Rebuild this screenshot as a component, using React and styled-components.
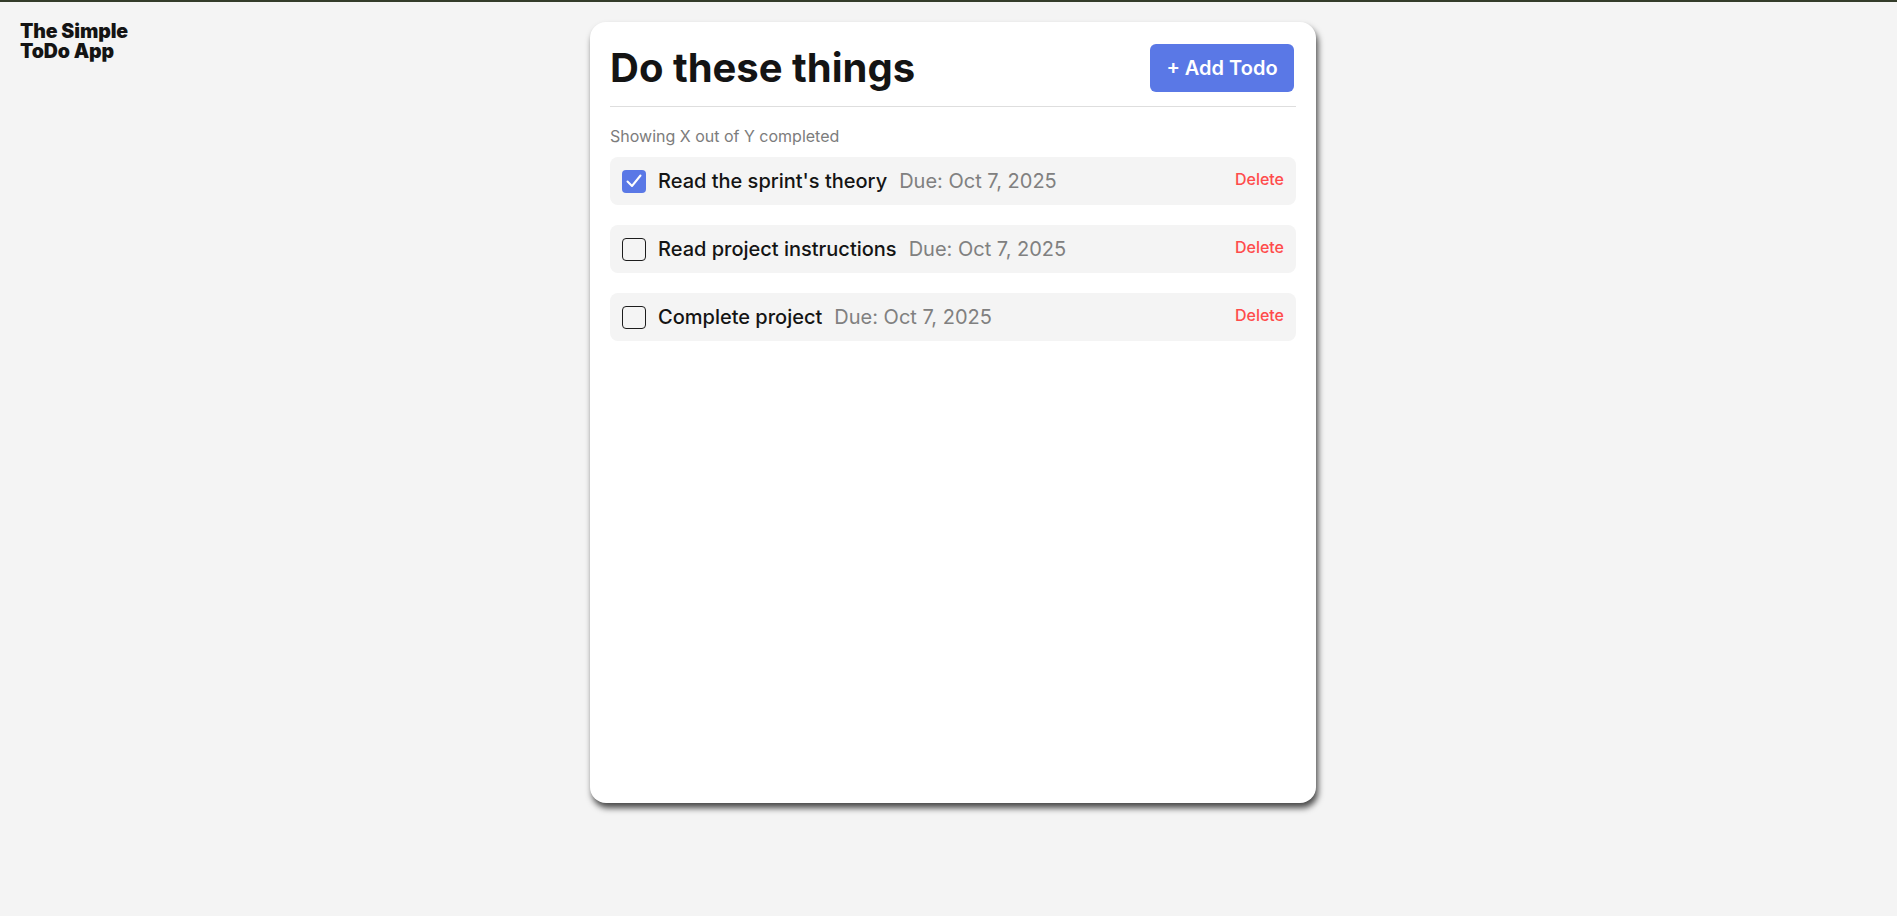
import React, { useState } from "react";
import styled, { createGlobalStyle } from "styled-components";

const GlobalStyle = createGlobalStyle`
  * { box-sizing: border-box; }
  html, body { margin: 0; padding: 0; }
  body {
    background: #f4f4f4;
    font-family: Inter, "Noto Sans", Arial, sans-serif;
    color: #141414;
    border-top: 2px solid #343c2a;
    min-height: 100vh;
  }
`;

const Page = styled.div`
  display: grid;
  grid-template-columns: 590px 726px 1fr;
  align-items: start;
  padding-top: 20px;
`;

const Brand = styled.h1`
  margin: 0;
  padding: 0 0 0 20px;
  font-size: 19.5px;
  font-weight: 900;
  line-height: 19.5px;
  letter-spacing: -0.1px;
  color: #141414;
  width: 150px;
`;

const Card = styled.main`
  background: #fff;
  height: 781px;
  border-radius: 16px;
  box-shadow: 2px 5px 6px rgba(0, 0, 0, 0.7);
  padding: 22px 20px 20px;
  display: flex;
  flex-direction: column;
`;

const Header = styled.header`
  display: flex;
  justify-content: space-between;
  align-items: center;
  padding: 0 2px 14px 0;
  border-bottom: 1.5px solid #dedede;
`;

const Title = styled.h2`
  margin: 0;
  font-size: 40px;
  font-weight: 700;
  line-height: 48px;
  color: #141414;
`;

const AddButton = styled.button`
  height: 48px;
  width: 144px;
  border: none;
  border-radius: 6px;
  background: #5a78e6;
  color: #fff;
  font-family: inherit;
  font-size: 20px;
  font-weight: 600;
  cursor: pointer;
`;

const Summary = styled.p`
  margin: 19px 0 11px;
  font-size: 16px;
  color: #7c7c7c;
  line-height: 20px;
`;

const List = styled.ul`
  list-style: none;
  margin: 0;
  padding: 0;
  display: flex;
  flex-direction: column;
  gap: 20px;
`;

const Row = styled.li`
  height: 48px;
  background: #f4f4f4;
  border-radius: 8px;
  display: flex;
  align-items: center;
  padding: 0 12px 0 12px;
`;

const Box = styled.span`
  width: 24px;
  height: 23px;
  flex: none;
  border-radius: 4px;
  display: flex;
  align-items: center;
  justify-content: center;
  background: ${(p) => (p.$checked ? "#5a78e6" : "transparent")};
  border: ${(p) => (p.$checked ? "none" : "1.2px solid #1c1c1c")};
  margin-right: 12px;
  cursor: pointer;
`;

const Name = styled.span`
  font-size: 20px;
  font-weight: 500;
  color: #141414;
  margin-right: 12px;
`;

const Due = styled.span`
  font-size: 20px;
  color: #808080;
`;

const Delete = styled.button`
  margin-left: auto;
  align-self: flex-start;
  margin-top: 12px;
  border: none;
  background: none;
  padding: 0;
  font-family: inherit;
  font-size: 16px;
  font-weight: 500;
  color: #ff4b4b;
  cursor: pointer;
`;

const todos = [
  { id: 1, name: "Read the sprint's theory", due: "Oct 7, 2025", done: true },
  { id: 2, name: "Read project instructions", due: "Oct 7, 2025", done: false },
  { id: 3, name: "Complete project", due: "Oct 7, 2025", done: false },
];

function Check() {
  return (
    <svg width="18" height="16" viewBox="0 0 18 16" fill="none">
      <path d="M2.5 8.5L7 13L15.5 2.5" stroke="#fff" strokeWidth="2" strokeLinecap="round" strokeLinejoin="round" />
    </svg>
  );
}

export default function App() {
  const [items, setItems] = useState(todos);
  const toggle = (id) =>
    setItems((list) => list.map((t) => (t.id === id ? { ...t, done: !t.done } : t)));
  return (
    <>
      <GlobalStyle />
      <Page>
        <Brand>The Simple ToDo App</Brand>
        <Card>
          <Header>
            <Title>Do these things</Title>
            <AddButton>+ Add Todo</AddButton>
          </Header>
          <Summary>Showing X out of Y completed</Summary>
          <List>
            {items.map((t) => (
              <Row key={t.id}>
                <Box $checked={t.done} onClick={() => toggle(t.id)}>
                  {t.done && <Check />}
                </Box>
                <Name>{t.name}</Name>
                <Due>Due: {t.due}</Due>
                <Delete>Delete</Delete>
              </Row>
            ))}
          </List>
        </Card>
      </Page>
    </>
  );
}
